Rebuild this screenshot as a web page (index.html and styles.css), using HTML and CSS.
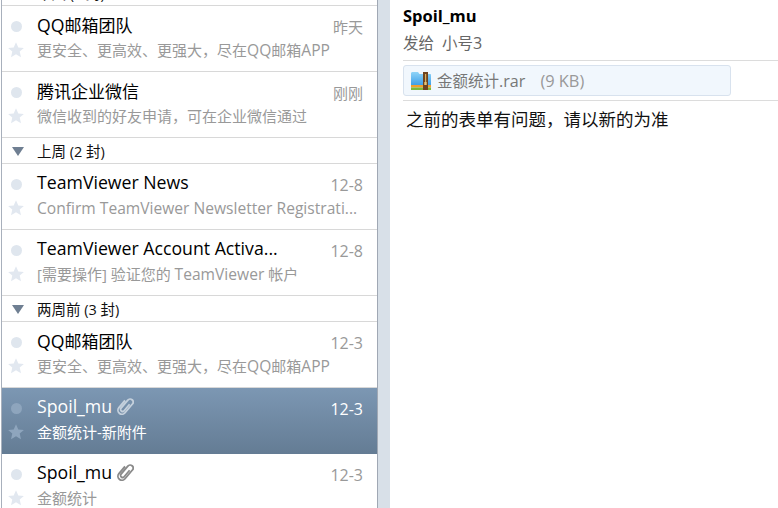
FILE: index.html
```html
<!DOCTYPE html>
<html lang="zh">
<head>
<meta charset="utf-8">
<title>Mail</title>
<link rel="stylesheet" href="styles.css">
</head>
<body>
<svg class="defs" width="0" height="0" aria-hidden="true">
  <symbol id="clip" viewBox="0 0 17 18">
    <g transform="translate(8.500 9) rotate(40) translate(-5 -10)">
      <path d="M7 6v8.500a2 2 0 0 1-4 0V4a3 3 0 0 1 6 0v11.500a4 4 0 0 1-8 0V6" fill="none" stroke="currentColor" stroke-width="1.800"/>
    </g>
  </symbol>
  <symbol id="star" viewBox="0 0 16 16">
    <path d="M8 .3l2.300 5.100 5.600.5-4.200 3.700 1.300 5.600L8 12.300l-5 2.900 1.300-5.600L.1 5.900l5.600-.5z" fill="currentColor"/>
  </symbol>
</svg>
<div class="app">
  <section class="list">
    <div class="scroller">
      <div class="group"><span class="tri"></span>今天 (2 封)</div>
      <div class="row">
        <div class="marks"><span class="dot"></span><svg class="star"><use href="#star"/></svg></div>
        <div class="main"><div class="line1"><span class="sender"><span class="lat">QQ</span>邮箱团队</span><span class="date">昨天</span></div><div class="subject">更安全、更高效、更强大，尽在<span class="lat">QQ</span>邮箱<span class="lat">APP</span></div></div>
      </div>
      <div class="row">
        <div class="marks"><span class="dot"></span><svg class="star"><use href="#star"/></svg></div>
        <div class="main"><div class="line1"><span class="sender">腾讯企业微信</span><span class="date">刚刚</span></div><div class="subject">微信收到的好友申请，可在企业微信通过</div></div>
      </div>
      <div class="group"><span class="tri"></span>上周 (2 封)</div>
      <div class="row">
        <div class="marks"><span class="dot"></span><svg class="star"><use href="#star"/></svg></div>
        <div class="main"><div class="line1"><span class="sender lat">TeamViewer News</span><span class="date lat">12-8</span></div><div class="subject lat">Confirm TeamViewer Newsletter Registrati...</div></div>
      </div>
      <div class="row">
        <div class="marks"><span class="dot"></span><svg class="star"><use href="#star"/></svg></div>
        <div class="main"><div class="line1"><span class="sender lat">TeamViewer Account Activa...</span><span class="date lat">12-8</span></div><div class="subject">[需要操作] 验证您的 <span class="lat">TeamViewer</span> 帐户</div></div>
      </div>
      <div class="group"><span class="tri"></span>两周前 (3 封)</div>
      <div class="row">
        <div class="marks"><span class="dot"></span><svg class="star"><use href="#star"/></svg></div>
        <div class="main"><div class="line1"><span class="sender"><span class="lat">QQ</span>邮箱团队</span><span class="date lat">12-3</span></div><div class="subject">更安全、更高效、更强大，尽在<span class="lat">QQ</span>邮箱<span class="lat">APP</span></div></div>
      </div>
      <div class="row selected">
        <div class="marks"><span class="dot"></span><svg class="star"><use href="#star"/></svg></div>
        <div class="main"><div class="line1"><span class="sender lat">Spoil_mu</span><svg class="clip"><use href="#clip"/></svg><span class="date lat">12-3</span></div><div class="subject">金额统计-新附件</div></div>
      </div>
      <div class="row">
        <div class="marks"><span class="dot"></span><svg class="star"><use href="#star"/></svg></div>
        <div class="main"><div class="line1"><span class="sender lat">Spoil_mu</span><svg class="clip"><use href="#clip"/></svg><span class="date lat">12-3</span></div><div class="subject">金额统计</div></div>
      </div>
    </div>
  </section>
  <div class="gutter"></div>
  <section class="reader">
    <header class="head">
      <div class="from">Spoil_mu</div>
      <div class="to">发给 小号<span class="lat">3</span></div>
    </header>
    <div class="attachments">
      <div class="file">
        <svg class="rar" viewBox="0 0 20 20" width="20" height="20">
          <defs>
            <linearGradient id="folder" x1="0" y1="0" x2="0" y2="1">
              <stop offset="0" stop-color="#8fd4f8"/>
              <stop offset="1" stop-color="#3f9fe8"/>
            </linearGradient>
          </defs>
          <path d="M0 2.500C0 1.600.6 1 1.500 1H7l1.500 2H19c.6 0 1 .4 1 1v10H0z" fill="url(#folder)"/>
          <rect x="0" y="14" width="20" height="2.500" fill="#f0a030"/>
          <rect x="0" y="16.500" width="20" height="2.500" fill="#7cb83c"/>
          <rect x="12" y="1" width="5" height="18" fill="#6e4420"/>
          <rect x="14" y="3" width="1.200" height="8" fill="#d8b060"/>
          <rect x="13.300" y="11" width="2.400" height="3" fill="#e8c878"/>
        </svg>
        <span class="fname">金额统计<span class="lat">.rar</span></span><span class="fsize lat">(9 KB)</span>
      </div>
    </div>
    <div class="body">之前的表单有问题，请以新的为准</div>
  </section>
</div>
</body>
</html>
```
FILE: styles.css
```css
* { box-sizing: border-box; }
html, body { margin: 0; height: 100%; overflow: hidden; background: #fff; }
body { font-family: "Open Sans", "Noto Sans CJK SC", sans-serif; color: #000; }
.defs { display: block; height: 0; }
.app { display: flex; width: 778px; height: 508px; overflow: hidden; padding-left: 1px; }
.lat { font-size: 1.04em; }

.list { width: 377px; flex: none; height: 508px; overflow: hidden; border-left: 1px solid #a8b0bc; border-right: 1px solid #a0a8b4; }
.scroller { margin-top: -20px; }
.group { display: flex; align-items: center; height: 26px; border-bottom: 1px solid #d8d8d8; font-size: 14.500px; color: #111; padding-left: 35px; position: relative; white-space: pre; }
.tri { position: absolute; left: 10px; top: 9px; width: 0; height: 0; border-left: 6px solid transparent; border-right: 6px solid transparent; border-top: 9px solid #6f7f92; }

.row { display: flex; height: 66px; border-bottom: 1px solid #d8d8d8; }
.marks { width: 35px; flex: none; display: flex; flex-direction: column; align-items: center; padding: 15px 7px 0 0; gap: 10px; }
.dot { width: 11px; height: 11px; border-radius: 50%; background: #dfe6ee; }
.star { width: 16px; height: 16px; color: #e2e8f0; }
.main { flex: 1; min-width: 0; padding: 4px 14px 0 0; }
.line1 { display: flex; align-items: center; height: 28px; }
.sender { font-size: 17px; color: #000; white-space: nowrap; }
.clip { width: 17px; height: 18px; margin-left: 5px; color: #8a8a8a; }
.date { margin-left: auto; font-size: 15px; color: #999; padding-top: 4px; }
.subject { font-size: 15px; color: #999; margin-top: 2px; line-height: 21px; white-space: nowrap; }
.sender.lat { font-size: 17.700px; }
.subject.lat { font-size: 15.600px; }
.date.lat { font-size: 16px; padding-top: 6px; }

.row.selected { background: linear-gradient(#7c97b3, #647c94); border-bottom: 0; }
.selected .sender, .selected .date, .selected .subject { color: #fff; }
.selected .clip { color: #c4d0dc; }
.selected .dot { background: #8ea5bd; }
.selected .star { color: #8ea5bd; }

.gutter { width: 12px; flex: none; background: #d8e0e8; }

.reader { flex: 1; min-width: 0; padding-left: 13px; }
.head { height: 61px; border-bottom: 1px solid #dcdcdc; padding-top: 5px; }
.from { font-size: 16.500px; font-weight: 700; line-height: 22px; }
.to { font-size: 15.500px; color: #666; line-height: 22px; margin-top: 5px; word-spacing: 4px; }
.attachments { height: 40px; border-bottom: 1px solid #dcdcdc; padding-top: 4px; }
.file { display: flex; align-items: center; width: 328px; height: 31px; background: #f1f7fd; border: 1px solid #d8e2ee; border-radius: 3px; padding-left: 7px; font-size: 15.500px; }
.rar { flex: none; margin-right: 6px; }
.fname { color: #777; }
.fsize { color: #999; margin-left: 15px; font-size: 16.400px; }
.body { font-size: 17.500px; color: #111; padding: 7px 0 0 3px; line-height: 22px; }
```
